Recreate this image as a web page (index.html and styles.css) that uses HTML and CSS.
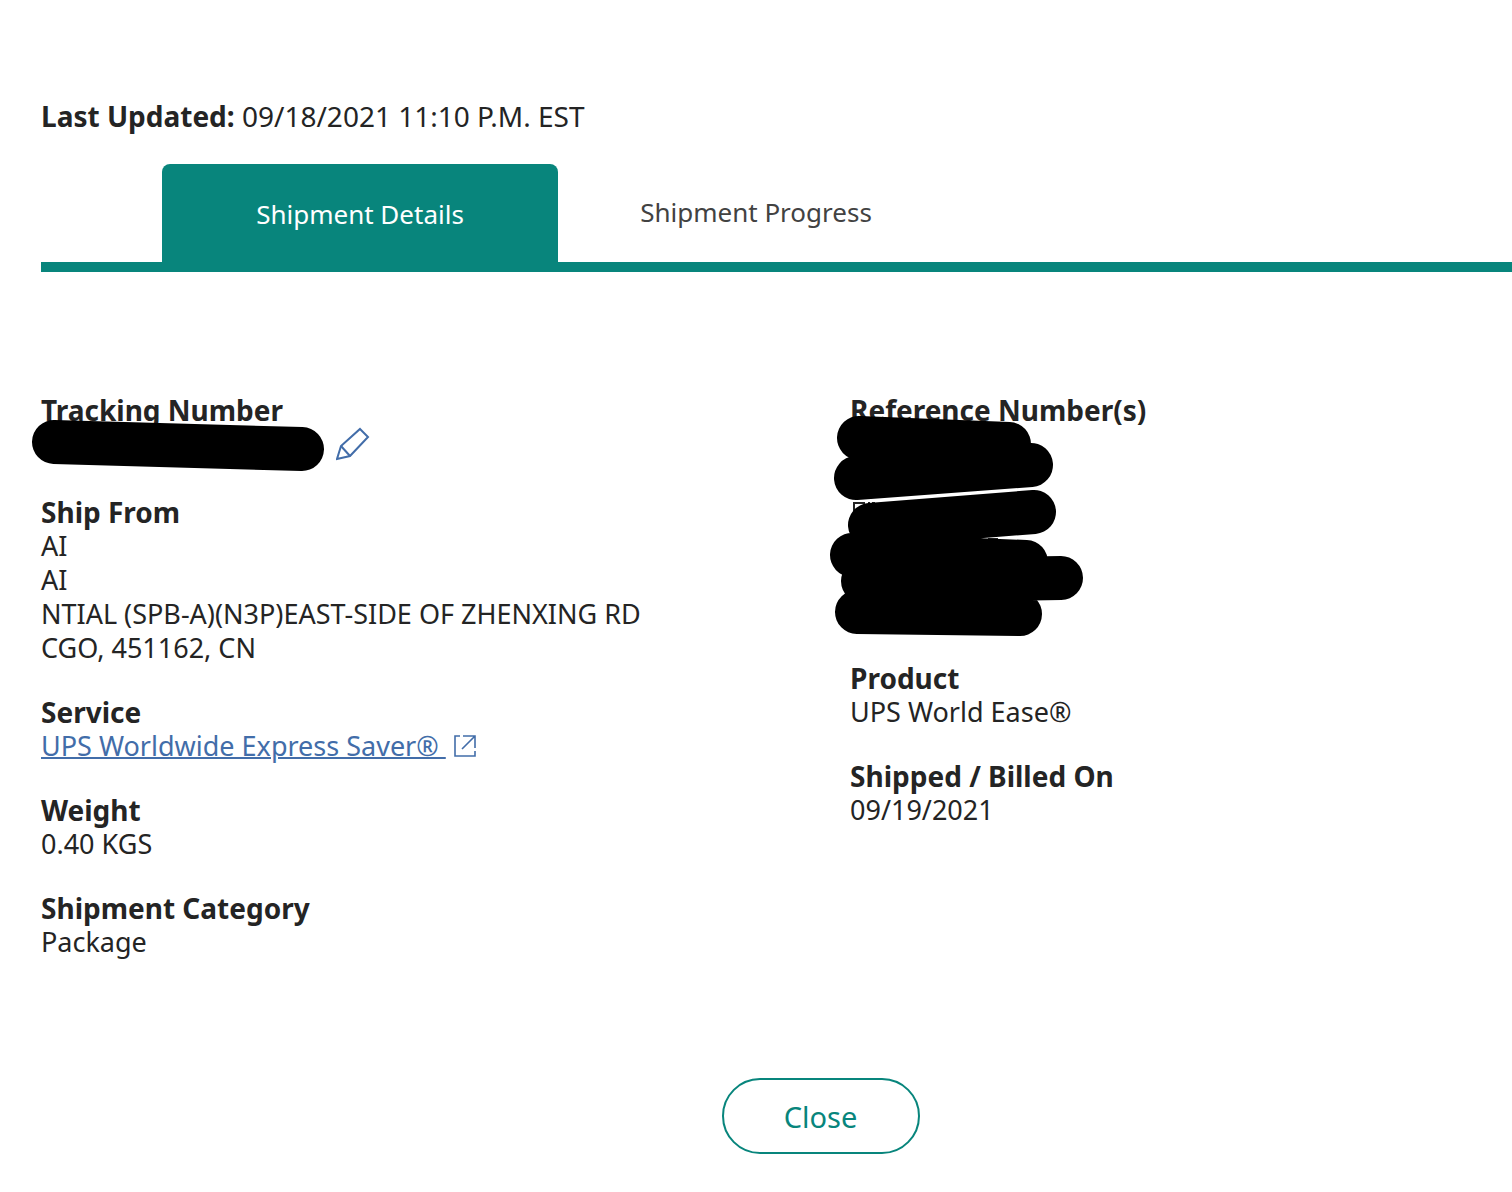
FILE: index.html
```html
<!DOCTYPE html>
<html lang="en">
<head>
    <meta charset="UTF-8">
    <title>Shipment Details</title>
    <link rel="stylesheet" href="styles.css">
</head>
<body>
    <main class="dialog">
        <p class="updated"><strong>Last Updated:</strong> 09/18/2021 11:10 P.M. EST</p>

        <div class="tabs" role="tablist">
            <button class="tab active" role="tab" aria-selected="true">Shipment Details</button>
            <button class="tab" role="tab" aria-selected="false">Shipment Progress</button>
        </div>

        <div class="details">
            <dl class="column">
                <div class="item tracking">
                    <dt>Tracking Number</dt>
                    <dd class="number">
                        <button class="edit" aria-label="Edit">
                            <svg width="34" height="34" viewBox="0 0 34 34" fill="none" stroke="#426da9" stroke-width="2">
                                <path d="M24 2l8 8-18 19-13 3 4-13z"/>
                                <path d="M5 19l9 10"/>
                            </svg>
                        </button>
                    </dd>
                    <svg class="redact" width="340" height="90" viewBox="0 0 340 90">
                        <path d="M32 49L280 56"/>
                    </svg>
                </div>
                <div class="item">
                    <dt>Ship From</dt>
                    <dd>AI</dd>
                    <dd>AI</dd>
                    <dd>NTIAL (SPB-A)(N3P)EAST-SIDE OF ZHENXING RD</dd>
                    <dd>CGO, 451162, CN</dd>
                </div>
                <div class="item">
                    <dt>Service</dt>
                    <dd class="service">
                        <a href="#">UPS Worldwide Express Saver®&nbsp;</a>
                        <svg width="22" height="24" viewBox="0 0 22 24" fill="none" stroke="#426da9" stroke-width="1.6">
                            <path d="M6 2H1V22H21V17M9 2H21V14M21 2L8 15"/>
                        </svg>
                    </dd>
                </div>
                <div class="item">
                    <dt>Weight</dt>
                    <dd>0.40 KGS</dd>
                </div>
                <div class="item">
                    <dt>Shipment Category</dt>
                    <dd>Package</dd>
                </div>
            </dl>

            <dl class="column">
                <div class="item reference">
                    <dt>Reference Number(s)</dt>
                    <svg class="redact" width="340" height="260" viewBox="0 0 340 260">
                        <path class="trace" d="M23 119V110H34M37 110h2M41 110h3M157 146h10"/>
                        <path d="M28 45L178 51M25 85L200 72M39 132L203 119M21 162L195 169M32 188L230 185M26 219L189 221"/>
                    </svg>
                </div>
                <div class="item">
                    <dt>Product</dt>
                    <dd>UPS World Ease®</dd>
                </div>
                <div class="item">
                    <dt>Shipped / Billed On</dt>
                    <dd>09/19/2021</dd>
                </div>
            </dl>
        </div>

        <div class="actions">
            <button class="close">Close</button>
        </div>
    </main>
</body>
</html>
```
FILE: styles.css
```css
body {
    margin: 0;
    background-color: #fff;
    color: #242424;
    font-family: "Noto Sans", Tahoma, sans-serif;
    font-size: 27px;
    line-height: 34px;
}
button {
    font-family: inherit;
    cursor: pointer;
}
.dialog {
    padding: 99px 0 38px 41px;
}
p, dl, dd {
    margin: 0;
}
.updated, dt {
    font-size: 28px;
}
dt {
    font-weight: bold;
}
.tabs {
    display: flex;
    margin-top: 31px;
    padding-left: 121px;
    border-bottom: 10px solid #08857c;
}
.tab {
    width: 396px;
    height: 98px;
    padding: 0 0 2px;
    border: none;
    background: none;
    color: #424242;
    font-size: 26px;
}
.tab.active {
    padding: 2px 0 0;
    background-color: #08857c;
    border-radius: 8px 8px 0 0;
    color: #fff;
}
.details {
    display: grid;
    grid-template-columns: 55% 45%;
    margin-top: 121px;
}
.column {
    display: flex;
    flex-direction: column;
    gap: 30px;
}
.tracking, .reference {
    position: relative;
}
.number {
    height: 38px;
    padding-left: 295px;
}
.edit {
    padding: 0;
    border: none;
    background: none;
}
.edit svg {
    display: block;
}
.reference {
    height: 238px;
}
/* marker strokes over the private numbers */
.redact {
    position: absolute;
    top: 0;
    left: -19px;
    overflow: visible;
    fill: none;
    stroke: #000;
    stroke-width: 44px;
    stroke-linecap: round;
    pointer-events: none;
}
.redact .trace {
    stroke: #242424;
    stroke-width: 2px;
    stroke-linecap: butt;
}
.service {
    display: flex;
    align-items: center;
    gap: 8px;
}
a {
    color: #426da9;
    text-decoration-thickness: 2px;
}
.actions {
    display: flex;
    justify-content: center;
    margin-top: 119px;
    padding-left: 88px;
}
.close {
    width: 198px;
    height: 76px;
    border: 2px solid #08857c;
    border-radius: 38px;
    background-color: #fff;
    color: #08857c;
    font-size: 29px;
}
```
